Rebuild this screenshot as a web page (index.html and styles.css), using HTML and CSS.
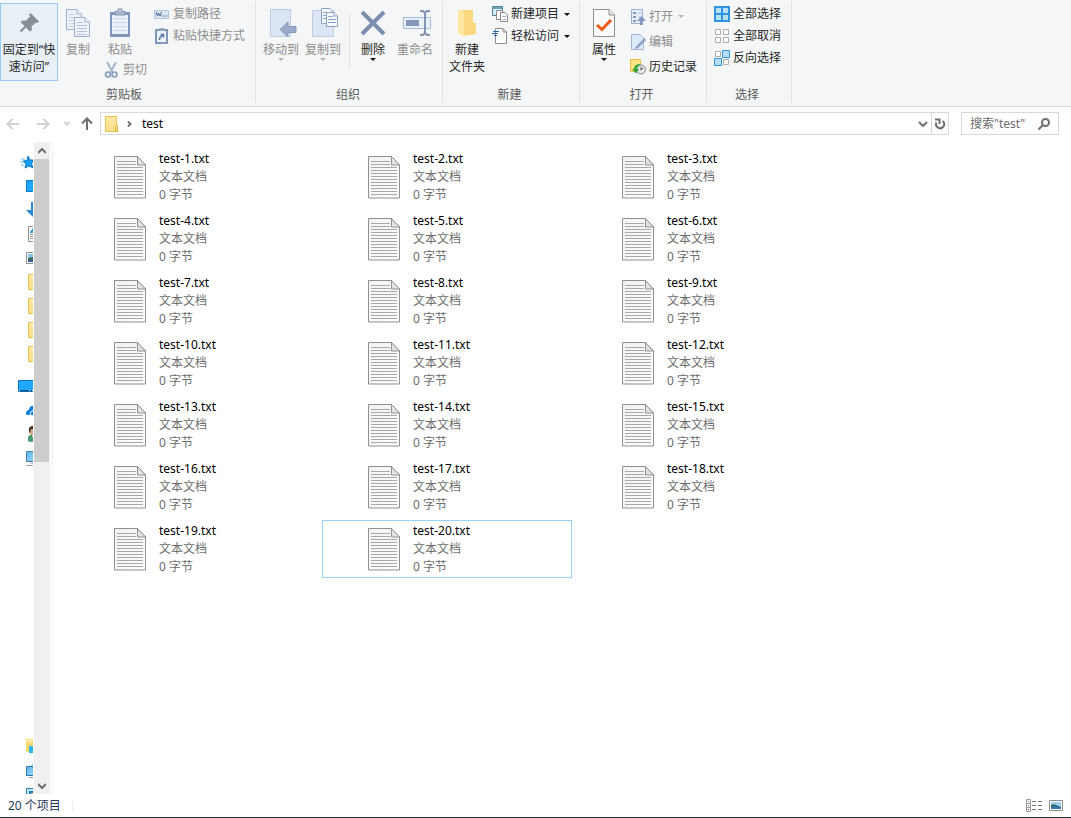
FILE: index.html
```html
<!DOCTYPE html>
<html lang="zh-CN">
<head>
<meta charset="utf-8">
<title>test</title>
<link rel="stylesheet" href="styles.css">
</head>
<body>
<svg class="defs" aria-hidden="true">
  <defs>
    <linearGradient id="paper" x1="0" y1="0" x2="1" y2="1"><stop offset="0" stop-color="#f2f2f2"/><stop offset="1" stop-color="#fdfdff"/></linearGradient>
    <linearGradient id="gold" x1="0" y1="0" x2="0" y2="1"><stop offset="0" stop-color="#ffe9a6"/><stop offset="1" stop-color="#fbdf88"/></linearGradient>
    <linearGradient id="sky" x1="0" y1="0" x2="1" y2="1"><stop offset="0" stop-color="#5db8ee"/><stop offset="1" stop-color="#a5dcff"/></linearGradient>
  </defs>
  <symbol id="txt" viewBox="0 0 32 43">
    <path d="M.5.5H23.5L31.5 9V42H.5Z" fill="url(#paper)" stroke="#919191"/>
    <path d="M23.5.5V9H31.5Z" fill="#e2e3e4" stroke="#919191"/>
    <path d="M3 5.500H22M3 8.500H22M3 11.500H29M3 14.500H29M3 17.500H29M3 20.500H29M3 23.500H29M3 26.500H29M3 29.500H29M3 32.500H29M3 35.500H29M3 38.500H29" stroke="#a8a8a8"/>
  </symbol>
  <symbol id="folder" viewBox="0 0 16 16">
    <path d="M2.500.5H13.500V15.500H2.500Z" fill="url(#gold)" stroke="#e8c24d"/>
    <path d="M12.500 15.500V10.500L13.500 9.500H14.500V15.500Z" fill="#ffe596" stroke="#e0b63c"/>
  </symbol>
  <symbol id="down" viewBox="0 0 6 3"><path d="M0 0H6L3 3Z" fill="currentColor"/></symbol>
</svg>

<div class="window">
  <div class="ribbon">
    <section class="group group-clipboard">
      <div class="tools">
        <button class="big pinned">
          <span class="pic"><svg width="24" height="24" viewBox="0 0 24 24"><path d="M13.500 2L22 10.500L20.500 12L18.800 11.500L14.500 15.500L15 19L13 20.500L3.500 11L5.500 9.500L9 9.700L13 5.500L12 3.500Z" fill="#868e96"/><path d="M9 15L3.500 20.500" stroke="#868e96" stroke-width="2"/></svg></span>
          <span>固定到“快</span><span>速访问”</span>
        </button>
        <button class="big copy" disabled>
          <span class="pic"><svg width="26" height="30" viewBox="0 0 26 30"><g fill="#edf2fa" stroke="#9fb1cf"><path d="M1.500 1.500H12L16.500 6V21.500H1.500Z"/><path d="M12 1.500V6H16.500"/><path d="M4 6.500H10M4 9.500H14M4 12.500H14M4 15.500H14M4 18.500H14" stroke="#c3cfe2"/><path d="M9.500 9.500H20L24.500 14V28.500H9.500Z"/><path d="M20 9.500V14H24.500"/><path d="M12 14.500H18M12 17.500H22M12 20.500H22M12 23.500H22M12 26.500H22" stroke="#b4c3da"/></g></svg></span>
          <span>复制</span>
        </button>
        <div class="column">
          <button class="big paste" disabled>
            <span class="pic"><svg width="22" height="30" viewBox="0 0 22 30"><path d="M1 4H21V29H1Z" fill="#8196bb"/><path d="M3 7H19V26H3Z" fill="#edf2fa"/><path d="M4 10.500H18M4 14.500H18M4 18.500H18M4 22.500H18" stroke="#c9d6eb"/><path d="M6 3.500H9V1H13V3.500H16V7H6Z" fill="#a9b7cf" stroke="#8294b2"/><path d="M10 2.500H12" stroke="#fff"/></svg></span>
            <span>粘贴</span>
          </button>
          <button class="small" disabled><svg width="16" height="16" viewBox="0 0 16 16" fill="none" stroke="#8498ba"><path d="M3 0L8.500 10M12 0L6.500 10" stroke-width="2" stroke="#a7b5cd"/><ellipse cx="4" cy="12.500" rx="2.500" ry="2.500" stroke-width="1.500"/><ellipse cx="10.500" cy="12.500" rx="2.500" ry="2.500" stroke-width="1.500"/></svg>剪切</button>
        </div>
        <div class="column">
          <button class="small" disabled><svg width="16" height="16" viewBox="0 0 16 16"><path d="M.5 4.500H14.500V12.500H.5Z" fill="#dde6f5" stroke="#b4c3dc"/><path d="M2 6L3.500 10L4.500 7L6 10L7.500 6M8 10H9.500M10.500 10H11.500M12.500 10H13.500" fill="none" stroke="#4d648e"/></svg>复制路径</button>
          <button class="small" disabled><svg width="16" height="16" viewBox="0 0 16 16"><path d="M2 2H13V15H2Z" fill="#edf2fa" stroke="#8196bb" stroke-width="2"/><path d="M5 0H10V3H5Z" fill="#95a7c5"/><path d="M5.500 12C5.500 9 6.500 8 9 7.500M6.500 6.500H9.500V9.500" fill="none" stroke="#5874a5" stroke-width="1.500"/></svg>粘贴快捷方式</button>
        </div>
      </div>
      <h2>剪贴板</h2>
    </section>

    <section class="group group-organize">
      <div class="tools">
        <button class="big" disabled>
          <span class="pic shift"><svg width="28" height="30" viewBox="0 0 28 30"><path d="M1.500 1.500H21.500V28.500H1.500Z" fill="#dbe5f5" stroke="#bfcde3"/><path d="M11 21.500L19 14V18.500H27V24.500H19V29Z" fill="#99abc9" stroke="#8699bb"/></svg></span>
          <span>移动到</span><svg class="arrow" width="6" height="3"><use href="#down"/></svg>
        </button>
        <button class="big" disabled>
          <span class="pic shift"><svg width="28" height="30" viewBox="0 0 28 30"><path d="M1.500 2.500H22.500V28.500H1.500Z" fill="#dbe5f5" stroke="#bfcde3"/><g fill="#f5f8fc" stroke="#8ea2c3"><path d="M10.500.5H19L22.500 4V15.500H10.500Z"/><path d="M12 4.500H18M12 7.500H20M12 10.500H20"/><path d="M15.500 4.500H23L26.500 8V18.500H15.500Z"/><path d="M23 4.500V8H26.500M17 8.500H22M17 11.500H25M17 14.500H25"/></g></svg></span>
          <span>复制到</span><svg class="arrow" width="6" height="3"><use href="#down"/></svg>
        </button>
        <div class="separator"></div>
        <button class="big">
          <span class="pic"><svg width="28" height="28" viewBox="0 0 28 28"><path d="M3 3L25 25M25 3L3 25" stroke="#7d8fae" stroke-width="4"/></svg></span>
          <span>删除</span><svg class="arrow" width="6" height="3"><use href="#down"/></svg>
        </button>
        <button class="big" disabled>
          <span class="pic shift"><svg width="30" height="28" viewBox="0 0 30 28"><path d="M1.500 8.500H28.500V19.500H1.500Z" fill="#e9f0fa" stroke="#a5bcdf"/><path d="M4 11H17V17H4Z" fill="#8498bb"/><path d="M18 2H21L23 4L25 2H28M18 26H21L23 24L25 26H28M23 4V24" fill="none" stroke="#8294b2" stroke-width="2"/></svg></span>
          <span>重命名</span>
        </button>
      </div>
      <h2>组织</h2>
    </section>

    <section class="group">
      <div class="tools">
        <button class="big">
          <span class="pic"><svg width="20" height="28" viewBox="0 0 20 28"><path d="M6 1H16V14H19V25H6Z" fill="#f1d06c"/><path d="M1 1H4L7 4V28L1 24Z" fill="#ffe7a0"/><path d="M4 1H16V14L19 15V25L7 27V4Z" fill="#fad980"/></svg></span>
          <span>新建</span><span>文件夹</span>
        </button>
        <div class="column">
          <button class="small"><svg width="16" height="16" viewBox="0 0 16 16"><path d="M.5.500H10.500V9.500H.5Z" fill="#d5edf8" stroke="#538195"/><path d="M1 1H10V3H1Z" fill="#6da3b8"/><g fill="#fff" stroke="#8a8a8a"><path d="M4.500 4.500H10.500V13.500H4.500Z"/><path d="M8.500 6.500H13L15.500 9V15.500H8.500Z"/></g><path d="M10 10.500H14M10 13.500H14" stroke="#b7a9ca"/></svg>新建项目<svg class="arrow" width="6" height="3"><use href="#down"/></svg></button>
          <button class="small"><svg width="16" height="16" viewBox="0 0 16 16"><path d="M3.500.5H11L14.500 4V15.500H3.500Z" fill="#fff" stroke="#8a8a8a"/><path d="M11 .5V4H14.500" fill="none" stroke="#8a8a8a"/><path d="M1 3.500H7M0 5.500H6M2 7.500H5" stroke="#2866a8"/></svg>轻松访问<svg class="arrow" width="6" height="3"><use href="#down"/></svg></button>
        </div>
      </div>
      <h2>新建</h2>
    </section>

    <section class="group">
      <div class="tools">
        <button class="big">
          <span class="pic"><svg width="22" height="28" viewBox="0 0 22 28"><path d="M.5.5H16L21.500 6V27.500H.5Z" fill="#fafafa" stroke="#909090"/><path d="M16 .5V6H21.500" fill="#e5e5e5" stroke="#909090"/><path d="M4 16L9 20.500L18 11" fill="none" stroke="#f05a18" stroke-width="3"/></svg></span>
          <span>属性</span><svg class="arrow" width="6" height="3"><use href="#down"/></svg>
        </button>
        <div class="column roomy">
          <button class="small" disabled><svg width="16" height="16" viewBox="0 0 16 16"><path d="M1.500.5H12.500V14.500H1.500Z" fill="#e5edf8" stroke="#9cafcd"/><path d="M3 3H6V5H3ZM3 7H6V9H3ZM3 11H6V13H3Z" fill="#8498ba"/><path d="M8 4H11M8 8H10" stroke="#b3c2da"/><path d="M11.500 7L16 12H13V16H10V12H7Z" fill="#8298bf"/></svg>打开<svg class="arrow" width="6" height="3"><use href="#down"/></svg></button>
          <button class="small" disabled><svg width="16" height="16" viewBox="0 0 16 16"><path d="M1.500.5H10L13.500 4V15.500H1.500Z" fill="#dce7f7" stroke="#a3b5d0"/><path d="M14.500 4L16 6L8 14L5 15L6 12.500Z" fill="#8ca1c4"/></svg>编辑</button>
          <button class="small"><svg width="16" height="16" viewBox="0 0 16 16"><path d="M.5.5H10.500V12.500H.5Z" fill="#ffe385" stroke="#e5bf46"/><circle cx="11" cy="10.500" r="4.500" fill="#e4e6e8" stroke="#858a8e"/><path d="M11 8V11L13 9" fill="none" stroke="#556"/><path d="M10 5C5 5 4 8 4 10H2L6 14.500L9 10H7C7 8 8 7 10 6Z" fill="#37a637"/></svg>历史记录</button>
        </div>
      </div>
      <h2>打开</h2>
    </section>

    <section class="group group-select">
      <div class="tools">
        <div class="column">
          <button class="small"><svg width="16" height="16" viewBox="0 0 16 16"><path d="M1 1H15V15H1Z" fill="#b5e1fc" stroke="#3294e0" stroke-width="2"/><path d="M8 0V16M0 8H16" stroke="#3294e0" stroke-width="2"/></svg>全部选择</button>
          <button class="small"><svg width="16" height="16" viewBox="0 0 16 16" fill="#fff" stroke="#adadad"><path d="M1.500 1.500H6.500V6.500H1.500ZM9.500 1.500H14.500V6.500H9.500ZM1.500 9.500H6.500V14.500H1.500ZM9.500 9.500H14.500V14.500H9.500Z"/></svg>全部取消</button>
          <button class="small"><svg width="16" height="16" viewBox="0 0 16 16"><path d="M1.500 1.500H6.500V6.500H1.500ZM9.500 9.500H14.500V14.500H9.500Z" fill="#fff" stroke="#adadad"/><path d="M8.500.5H15.500V7.500H8.500ZM.5 8.500H7.500V15.500H.5Z" fill="#b5defa" stroke="#3294e0"/></svg>反向选择</button>
        </div>
      </div>
      <h2>选择</h2>
    </section>
  </div>

  <nav class="location">
    <div class="history">
      <button class="back" disabled aria-label="后退"><svg width="14" height="12" viewBox="0 0 14 12"><path d="M13 6H2M6.500 1L1.500 6L6.500 11"/></svg></button>
      <button class="forward" disabled aria-label="前进"><svg width="14" height="12" viewBox="0 0 14 12"><path d="M1 6H12M7.500 1L12.500 6L7.500 11"/></svg></button>
      <button class="recent" disabled aria-label="最近"><svg width="6" height="5" viewBox="0 0 6 5"><path d="M.5 1L3 3.500L5.500 1"/></svg></button>
      <button class="up" aria-label="上移"><svg width="12" height="13" viewBox="0 0 12 13"><path d="M6 13V2M1 6.500L6 1.500L11 6.500"/></svg></button>
    </div>
    <div class="address">
      <svg class="place" width="16" height="16"><use href="#folder"/></svg>
      <svg class="crumb-mark" width="5" height="6" viewBox="0 0 5 6"><path d="M1 .5L3.500 3L1 5.500"/></svg>
      <button class="crumb">test</button>
      <button class="expand" aria-label="展开"><svg width="10" height="6" viewBox="0 0 10 6"><path d="M1 1L5 5L9 1"/></svg></button>
      <button class="refresh" aria-label="刷新"><svg width="12" height="12" viewBox="0 0 12 12"><path d="M2.500 4.500A4 4 0 1 0 8.500 3M1 1.500H5.500V6"/></svg></button>
    </div>
    <form class="search">
      <input type="text" placeholder='搜索"test"' aria-label="搜索">
      <button type="button" aria-label="搜索"><svg width="12" height="12" viewBox="0 0 12 12"><circle cx="7.500" cy="4.500" r="3.500"/><path d="M5 7L.5 11.500"/></svg></button>
    </form>
  </nav>

  <div class="content">
    <aside class="sidebar">
      <div class="tree">
        <ul>
          <li class="star"><svg width="16" height="16" viewBox="0 0 16 16"><path d="M8 2L10 6L15 6L11.500 9.500L13 14L9 12L5 14L6 10L3 7L7 6.500Z" fill="#169cf0" stroke="#147bc2"/><path d="M1 5H5M0 8H4M1 11H4" stroke="#67bdf5"/></svg></li>
          <li><svg width="16" height="16" viewBox="0 0 16 16"><path d="M.5 2.500H15.500V13.500H.5Z" fill="#1da5ff" stroke="#0e77bf"/></svg></li>
          <li><svg width="16" height="16" viewBox="0 0 16 16"><path d="M5 0H11V8H16L8 16L0 8H5Z" fill="#2a86d9"/></svg></li>
          <li><svg width="16" height="16" viewBox="0 0 16 16"><path d="M2.500.5H14.500V15.500H2.500Z" fill="#fff" stroke="#919191"/><path d="M4 6L7 2V7H4Z" fill="#269ad9"/><path d="M4 8.500H12M4 10.500H12M4 12.500H12" stroke="#999"/></svg></li>
          <li><svg width="16" height="16" viewBox="0 0 16 16"><path d="M.5 2.500H15.500V13.500H.5Z" fill="#fff" stroke="#919191"/><path d="M2 4H14V12H2Z" fill="#87c6ed"/><path d="M2 8L7 7L14 10V12H2Z" fill="#396854"/><path d="M2 10H14V12H2Z" fill="#3662a1"/></svg></li>
          <li><svg width="16" height="16"><use href="#folder"/></svg></li>
          <li><svg width="16" height="16"><use href="#folder"/></svg></li>
          <li><svg width="16" height="16"><use href="#folder"/></svg></li>
          <li><svg width="16" height="16"><use href="#folder"/></svg></li>
          <li class="root"><svg width="18" height="16" viewBox="0 0 18 16"><path d="M.5 2.500H17.500V13.500H.5Z" fill="#20a8ff" stroke="#0d6fb4"/><path d="M1 12.500H18" stroke="#075386"/><path d="M1 12.500H2M11 12.500H12M14 12.500H15" stroke="#fff"/></svg></li>
          <li><svg width="16" height="16" viewBox="0 0 16 16"><path d="M0 12C0 9 1 8 3 8C3 4 6 3 9 4V13H2Q0 13 0 12Z" fill="#0b80e0"/><path d="M4 13Q4 9 8 8" fill="none" stroke="#fff"/></svg></li>
          <li><svg width="16" height="16" viewBox="0 0 16 16"><path d="M2 15V11Q3 9 6 8H10V15Q5 17 2 15Z" fill="#4a9b75"/><circle cx="7" cy="5" r="4" fill="#d9a987"/><path d="M3 5Q2 0 8 0V3H5L4 7Z" fill="#3d3027"/><path d="M6 9L8 15V9Z" fill="#fff"/></svg></li>
          <li><svg width="16" height="16" viewBox="0 0 16 16"><path d="M.5 1.500H15.500V11.500H.5Z" fill="url(#sky)" stroke="#467c9e"/><path d="M4 13H12M0 15.500H16" stroke="#9aa6b0"/></svg></li>
        </ul>
        <ul class="lower">
          <li><svg width="16" height="16" viewBox="0 0 16 16"><path d="M0 1H16V14H0Z" fill="#ffda70"/><path d="M1 3H6" stroke="#fff"/><path d="M3 8H10V15H3Z" fill="#2fb4ee"/></svg></li>
          <li><svg width="16" height="16" viewBox="0 0 16 16"><path d="M4 4L9 0V5Z" fill="#abd7dd"/><path d="M.5 4.500H15.500V13.500H.5Z" fill="url(#sky)" stroke="#2b7bab"/><path d="M3 15.500H13" stroke="#8d9ca8"/></svg></li>
          <li><svg width="16" height="16" viewBox="0 0 16 16"><path d="M.5 2.500H15.500V13.500H.5Z" fill="#bee5fa" stroke="#2878a4"/><path d="M3 5H10V12H3Z" fill="#1982c5"/><path d="M5 7H9V12H5Z" fill="#f0ba38"/></svg></li>
        </ul>
      </div>
      <div class="scrollbar">
        <button aria-label="向上滚动"><svg width="8" height="6" viewBox="0 0 8 6"><path d="M0 5L4 1L8 5"/></svg></button>
        <div class="track"><div class="thumb"></div></div>
        <button aria-label="向下滚动"><svg width="8" height="6" viewBox="0 0 8 6"><path d="M0 1L4 5L8 1"/></svg></button>
      </div>
    </aside>
    <main>
      <ul class="files">
        <li><svg width="32" height="43"><use href="#txt"/></svg><div><b>test-1.txt</b><p>文本文档</p><p>0 字节</p></div></li>
        <li><svg width="32" height="43"><use href="#txt"/></svg><div><b>test-2.txt</b><p>文本文档</p><p>0 字节</p></div></li>
        <li><svg width="32" height="43"><use href="#txt"/></svg><div><b>test-3.txt</b><p>文本文档</p><p>0 字节</p></div></li>
        <li><svg width="32" height="43"><use href="#txt"/></svg><div><b>test-4.txt</b><p>文本文档</p><p>0 字节</p></div></li>
        <li><svg width="32" height="43"><use href="#txt"/></svg><div><b>test-5.txt</b><p>文本文档</p><p>0 字节</p></div></li>
        <li><svg width="32" height="43"><use href="#txt"/></svg><div><b>test-6.txt</b><p>文本文档</p><p>0 字节</p></div></li>
        <li><svg width="32" height="43"><use href="#txt"/></svg><div><b>test-7.txt</b><p>文本文档</p><p>0 字节</p></div></li>
        <li><svg width="32" height="43"><use href="#txt"/></svg><div><b>test-8.txt</b><p>文本文档</p><p>0 字节</p></div></li>
        <li><svg width="32" height="43"><use href="#txt"/></svg><div><b>test-9.txt</b><p>文本文档</p><p>0 字节</p></div></li>
        <li><svg width="32" height="43"><use href="#txt"/></svg><div><b>test-10.txt</b><p>文本文档</p><p>0 字节</p></div></li>
        <li><svg width="32" height="43"><use href="#txt"/></svg><div><b>test-11.txt</b><p>文本文档</p><p>0 字节</p></div></li>
        <li><svg width="32" height="43"><use href="#txt"/></svg><div><b>test-12.txt</b><p>文本文档</p><p>0 字节</p></div></li>
        <li><svg width="32" height="43"><use href="#txt"/></svg><div><b>test-13.txt</b><p>文本文档</p><p>0 字节</p></div></li>
        <li><svg width="32" height="43"><use href="#txt"/></svg><div><b>test-14.txt</b><p>文本文档</p><p>0 字节</p></div></li>
        <li><svg width="32" height="43"><use href="#txt"/></svg><div><b>test-15.txt</b><p>文本文档</p><p>0 字节</p></div></li>
        <li><svg width="32" height="43"><use href="#txt"/></svg><div><b>test-16.txt</b><p>文本文档</p><p>0 字节</p></div></li>
        <li><svg width="32" height="43"><use href="#txt"/></svg><div><b>test-17.txt</b><p>文本文档</p><p>0 字节</p></div></li>
        <li><svg width="32" height="43"><use href="#txt"/></svg><div><b>test-18.txt</b><p>文本文档</p><p>0 字节</p></div></li>
        <li><svg width="32" height="43"><use href="#txt"/></svg><div><b>test-19.txt</b><p>文本文档</p><p>0 字节</p></div></li>
        <li class="focused"><svg width="32" height="43"><use href="#txt"/></svg><div><b>test-20.txt</b><p>文本文档</p><p>0 字节</p></div></li>
      </ul>
    </main>
  </div>

  <footer class="status">
    <span class="count">20 个项目</span>
    <div class="views">
      <button aria-label="详细信息"><svg width="16" height="13" viewBox="0 0 16 13"><path d="M.5.5H4.500V12.500H.5ZM.5 4.500H4.500M.5 8.500H4.500" fill="#fff" stroke="#9a9a9a"/><path d="M2 2.500H3" stroke="#2b8a57"/><path d="M2 6.500H3" stroke="#3b83e0"/><path d="M2 10.500H3" stroke="#d22"/><path d="M6 2.500H10M12 2.500H16M6 6.500H10M12 6.500H16M6 10.500H10M12 10.500H16" stroke="#777"/></svg></button>
      <button aria-label="大图标"><svg width="14" height="11" viewBox="0 0 14 11"><path d="M.5.500H13.500V10.500H.5Z" fill="#fff" stroke="#8d8d8d"/><path d="M2 2H12V9H2Z" fill="#a0cdf0"/><path d="M2 5L5 4L12 7V9H2Z" fill="#356f75"/><path d="M2 7H12V9H2Z" fill="#3a70b5"/></svg></button>
    </div>
  </footer>
</div>
</body>
</html>
```
FILE: styles.css
```css
* { box-sizing: border-box; }

body {
  margin: 0;
  font: 12px/18px "Noto Sans", "Noto Sans CJK SC", sans-serif;
  color: #000;
  background: #fff;
}

button {
  border: 0;
  padding: 0;
  background: none;
  font: inherit;
  color: inherit;
}

svg { display: block; flex: none; }
ul { list-style: none; margin: 0; padding: 0; }
p, h2 { margin: 0; font-size: 12px; font-weight: 400; }
.defs { position: absolute; width: 0; height: 0; }

.window {
  display: flex;
  flex-direction: column;
  height: 100vh;
  border-bottom: 1px solid #2c3236;
}

/* Ribbon */
.ribbon {
  display: flex;
  flex: none;
  background: #f5f6f7;
  border-bottom: 1px solid #dadbdc;
  color: #262626;
}

.group {
  position: relative;
  padding: 3px 7px 2px 3px;
}

.group::after {
  content: "";
  position: absolute;
  top: 1px;
  right: 0;
  bottom: 3px;
  border-right: 1px solid #e2e3e4;
}

.group-clipboard { padding-left: 0; padding-right: 8px; }
.group-organize { padding-left: 4px; }
.group-select { padding-right: 8px; }
.tools { display: flex; height: 83px; }
.group h2 { text-align: center; color: #5a5a5a; }
.column { display: flex; flex-direction: column; align-items: flex-start; }
.column.roomy { padding: 1px 0 0 1px; }

.big {
  display: flex;
  flex-direction: column;
  align-items: center;
  width: 42px;
  height: 78px;
  border: 1px solid transparent;
  line-height: 17px;
  white-space: nowrap;
}

.big .pic {
  display: flex;
  align-items: center;
  justify-content: center;
  height: 37px;
}

.pic.shift { padding-left: 4px; }
.big.pinned { width: 58px; background: #e8eff7; border-color: #99cbf7; }
.big.copy { width: 40px; margin-right: 2px; }
.big.paste { width: 40px; height: 56px; }

.small {
  display: flex;
  align-items: center;
  gap: 3px;
  height: 22px;
  padding: 0 3px 0 4px;
  white-space: nowrap;
}

.roomy .small { height: 25px; }
.small .arrow { margin-left: 2px; }
button:disabled { color: #8d8d8d; }
button:disabled .arrow { color: #b5b5b5; }
.arrow { color: #111; }
.separator { width: 1px; height: 55px; margin: 11px 2px 0 5px; background: #e2e3e4; }

/* Location bar */
.location {
  display: flex;
  flex: none;
  padding: 5px 12px 7px 0;
}

.location svg, .scrollbar svg {
  fill: none;
  stroke: #6f6f6f;
  stroke-width: 2;
}

.history { display: flex; gap: 4px; margin-right: 4px; }
.history button { display: flex; align-items: center; justify-content: center; }
.history button:disabled svg { stroke: #d2d2d2; }
.back, .forward { width: 26px; }
.recent { width: 14px; }
.up { width: 18px; }

.address {
  display: flex;
  align-items: center;
  flex: 1;
  height: 23px;
  margin-right: 12px;
  border: 1px solid #d9d9d9;
}

.location .place { margin: 0 8px 0 2px; stroke-width: 1; }
.crumb-mark { margin-right: 10px; }
.crumb { margin-right: auto; }
.expand, .refresh {
  display: flex;
  align-items: center;
  justify-content: center;
  width: 16px;
  height: 21px;
}
.refresh { width: 17px; border-left: 1px solid #d9d9d9; }

.search {
  display: flex;
  align-items: center;
  width: 98px;
  height: 23px;
  padding: 0 8px;
  border: 1px solid #d9d9d9;
}

.search input {
  flex: 1;
  min-width: 0;
  padding: 0;
  border: 0;
  outline: 0;
  background: none;
  font: inherit;
}

.search input::placeholder { color: #6d6d6d; }

/* Content */
.content { display: flex; flex: 1; min-height: 0; }
.sidebar { display: flex; width: 53px; border-right: 1px solid #f0f0f0; }

.tree {
  display: flex;
  flex-direction: column;
  justify-content: space-between;
  width: 33px;
  margin-right: 1px;
  padding-top: 8px;
  overflow: hidden;
}

.tree li {
  display: flex;
  align-items: center;
  height: 24px;
  padding-left: 26px;
}

.tree .star { padding-left: 20px; }
.tree .root { margin-top: 8px; padding-left: 18px; }
.lower { height: 60px; overflow: hidden; }

.scrollbar {
  display: flex;
  flex-direction: column;
  width: 16px;
  background: #f0f0f0;
}

.scrollbar button {
  display: flex;
  align-items: center;
  justify-content: center;
  height: 17px;
}

.track { flex: 1; }
.thumb { height: 49%; margin-right: 1px; background: #cdcdcd; }

main { flex: 1; padding: 6px 0 0 15px; overflow: hidden; }

.files {
  display: grid;
  grid-template-columns: repeat(auto-fill, 250px);
  gap: 4px;
}

.files li {
  display: flex;
  align-items: flex-start;
  gap: 13px;
  height: 58px;
  padding: 1px 0 0 45px;
  border: 1px solid transparent;
}

.files .focused { border-color: #99d1ff; }
.files svg { margin-top: 6px; }
.files b { display: block; font-weight: 400; }
.files p { color: #6d6d6d; }

/* Status bar */
.status {
  display: flex;
  align-items: center;
  justify-content: space-between;
  flex: none;
  height: 23px;
  padding: 0 8px;
  color: #1e395b;
}

.count { padding-right: 11px; border-right: 1px solid #efefef; line-height: 12px; }
.views { display: flex; align-items: center; gap: 7px; }
```
